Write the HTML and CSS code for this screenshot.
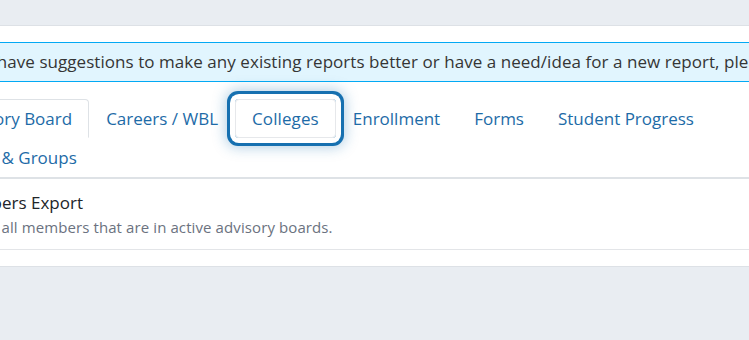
FILE: index.html
```html
<!DOCTYPE html>
<html lang="en">
<head>
    <meta charset="UTF-8">
    <meta name="viewport" content="width=device-width, initial-scale=1.0">
    <title>Reports</title>
    <link rel="stylesheet" href="styles.css">
</head>
<body>
    <div class="topbar"></div>
    <main class="card">
        <div class="alert">If you have suggestions to make any existing reports better or have a need/idea for a new report, please let us know.</div>

        <ul class="nav-tabs">
            <li><a class="tab active" href="#">Advisory Board</a></li>
            <li><a class="tab" href="#">Careers / WBL</a></li>
            <li><a class="tab focused" href="#">Colleges</a></li>
            <li><a class="tab" href="#">Enrollment</a></li>
            <li><a class="tab" href="#">Forms</a></li>
            <li><a class="tab" href="#">Student Progress</a></li>
            <li><a class="tab" href="#">Users &amp; Groups</a></li>
        </ul>

        <div class="report-list">
            <a class="report-item" href="#">
                <div class="report-title">Members Export</div>
                <div class="report-desc">Export all members that are in active advisory boards.</div>
            </a>
        </div>
    </main>
</body>
</html>
```

FILE: styles.css
```css
body {
    font-family: "Open Sans", "Liberation Sans", sans-serif;
    margin: 0;
    background: #e9edf2;
    overflow: hidden;
}

.topbar {
    height: 25px;
    border-bottom: 1px solid #dde1e6;
}

.card {
    background: #fff;
    margin-left: -81px;
    width: 900px;
    padding: 16px;
    box-sizing: border-box;
    border-bottom: 1px solid #dde1e6;
}

.alert {
    background: #e1f5fe;
    border: 1px solid #03a9f4;
    padding: 8px 20px 8px 12px;
    font-size: 17px;
    line-height: 22px;
    letter-spacing: 0.05px;
    color: #353535;
    white-space: nowrap;
    overflow: hidden;
}

.nav-tabs {
    list-style: none;
    margin: 17px 0 0;
    padding: 0;
    display: flex;
    flex-wrap: wrap;
    border-bottom: 2px solid #dee2e6;
}

.tab {
    display: block;
    padding: 8px 16px;
    font-size: 17px;
    line-height: 21px;
    color: #1d6ba7;
    text-decoration: none;
    border: 1px solid transparent;
    border-radius: 4px 4px 0 0;
}

.tab.active {
    border-color: #dee2e6 #dee2e6 transparent;
}

.tab.focused {
    border-color: #e6e8eb;
    border-radius: 4px;
    letter-spacing: 0.1px;
    box-shadow: 0 0 0 5px #fff, 0 0 0 8px #1670b0, 0 0 14px 9px rgba(22, 112, 176, 0.35);
}

.report-item {
    display: block;
    padding: 12px 20px 12px 16px;
    border-bottom: 1px solid #e3e5e8;
    text-decoration: none;
}

.report-title {
    font-size: 17px;
    line-height: 24px;
    color: #212529;
}

.report-desc {
    margin-top: 2px;
    font-size: 15px;
    line-height: 20px;
    letter-spacing: 0.1px;
    color: #6b7280;
}
```
